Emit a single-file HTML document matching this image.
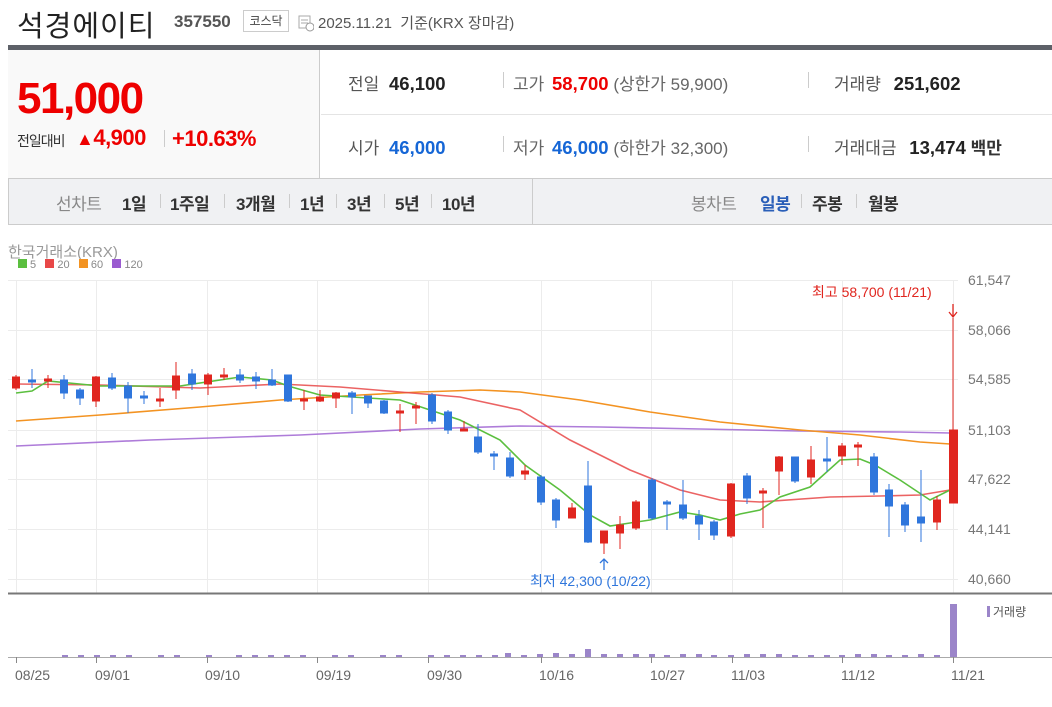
<!DOCTYPE html>
<html><head><meta charset="utf-8"><style>
*{margin:0;padding:0;box-sizing:border-box}
body{width:1052px;height:707px;background:#fff;font-family:"Liberation Sans","Noto Sans CJK KR",sans-serif;position:relative;overflow:hidden;color:#222}
.a{position:absolute;white-space:nowrap}
.t{position:absolute;top:190px;font-size:17px;font-weight:bold;color:#333;letter-spacing:-0.5px}
.s{position:absolute;top:194px;width:1px;height:14px;background:#ccc}
.n{font-weight:bold;font-size:18.5px}
</style></head><body>
<div class="a" style="left:17px;top:3px;font-size:29px;color:#222;letter-spacing:1px">석경에이티</div>
<div class="a" style="left:174px;top:12px;font-size:17px;font-weight:bold;color:#555">357550</div>
<div class="a" style="left:243px;top:10px;width:46px;height:22px;border:1px solid #ccc;font-size:12px;color:#444;text-align:center;line-height:20px">코스닥</div>
<svg class="a" style="left:298px;top:14px" width="16" height="18"><rect x="1" y="2" width="11" height="12" fill="none" stroke="#aaa"/><line x1="3" y1="6" x2="10" y2="6" stroke="#aaa"/><line x1="3" y1="9" x2="10" y2="9" stroke="#aaa"/><circle cx="12" cy="13" r="4" fill="#fff" stroke="#999"/></svg>
<div class="a" style="left:318px;top:12px;font-size:15px;color:#555">2025.11.21 &nbsp;기준(KRX 장마감)</div>
<div class="a" style="left:8px;top:45px;width:1044px;height:5px;background:#5d6168"></div>
<div class="a" style="left:8px;top:50px;width:312px;height:128px;background:#f9f9f9;border-right:1px solid #ccc"></div>
<div class="a" style="left:321px;top:114px;width:731px;height:1px;background:#e4e4e4"></div>
<div class="a" style="left:17px;top:74px;font-size:44px;font-weight:bold;color:#e00;letter-spacing:-1.5px">51,000</div>
<div class="a" style="left:17px;top:131px;font-size:14px;color:#333;letter-spacing:-1px">전일대비</div>
<div class="a" style="left:76px;top:125px;font-size:22px;font-weight:bold;color:#e00;letter-spacing:-0.5px"><span style="font-size:18px">▲</span>4,900</div>
<div class="a" style="left:164px;top:130px;width:1px;height:17px;background:#ccc"></div>
<div class="a" style="left:172px;top:126px;font-size:22px;font-weight:bold;color:#e00;letter-spacing:-0.5px">+10.63%</div>
<div class="a" style="left:348px;top:70px;font-size:17px;color:#555">전일 <span class="n" style="color:#222;margin-left:5px">46,100</span></div>
<div class="a" style="left:348px;top:134px;font-size:17px;color:#555">시가 <span class="n" style="color:#1566d6;margin-left:5px">46,000</span></div>
<div class="a" style="left:503px;top:72px;width:1px;height:16px;background:#ccc"></div>
<div class="a" style="left:503px;top:136px;width:1px;height:16px;background:#ccc"></div>
<div class="a" style="left:513px;top:70px;font-size:17px;color:#666">고가 <span class="n" style="color:#e00;margin-left:3px">58,700</span> (상한가 59,900)</div>
<div class="a" style="left:513px;top:134px;font-size:17px;color:#666">저가 <span class="n" style="color:#1566d6;margin-left:3px">46,000</span> (하한가 32,300)</div>
<div class="a" style="left:808px;top:72px;width:1px;height:16px;background:#ccc"></div>
<div class="a" style="left:808px;top:136px;width:1px;height:16px;background:#ccc"></div>
<div class="a" style="left:834px;top:70px;font-size:17px;color:#555">거래량 <span class="n" style="color:#222;margin-left:8px">251,602</span></div>
<div class="a" style="left:834px;top:134px;font-size:17px;color:#555">거래대금 <span class="n" style="color:#222;margin-left:8px">13,474</span><span style="color:#333;font-weight:bold"> 백만</span></div>
<div class="a" style="left:8px;top:178px;width:1044px;height:47px;background:#f0f1f3;border:1px solid #ccc;border-right:none"></div>
<div class="a" style="left:532px;top:179px;width:1px;height:45px;background:#ccc"></div>
<div class="t" style="left:56px;color:#888;font-weight:normal">선차트</div>
<div class="t" style="left:122px">1일</div><div class="s" style="left:160px"></div>
<div class="t" style="left:170px">1주일</div><div class="s" style="left:224px"></div>
<div class="t" style="left:236px">3개월</div><div class="s" style="left:289px"></div>
<div class="t" style="left:300px">1년</div><div class="s" style="left:336px"></div>
<div class="t" style="left:347px">3년</div><div class="s" style="left:384px"></div>
<div class="t" style="left:395px">5년</div><div class="s" style="left:431px"></div>
<div class="t" style="left:442px">10년</div>
<div class="t" style="left:691px;color:#888;font-weight:normal">봉차트</div>
<div class="t" style="left:760px;color:#2a5fb8">일봉</div><div class="s" style="left:801px"></div>
<div class="t" style="left:812px">주봉</div><div class="s" style="left:856px"></div>
<div class="t" style="left:868px">월봉</div>
<div class="a" style="left:8px;top:241px;font-size:15px;color:#999">한국거래소(KRX)</div>
<div class="a" style="left:18px;top:259px;font-size:11px;color:#888"><span style="display:inline-block;width:9px;height:9px;background:#5bbf3f"></span> 5 &nbsp; <span style="display:inline-block;width:9px;height:9px;background:#e84848"></span> 20 &nbsp; <span style="display:inline-block;width:9px;height:9px;background:#f39322"></span> 60 &nbsp; <span style="display:inline-block;width:9px;height:9px;background:#9a5bd0"></span> 120</div>
<svg class="a" style="left:0;top:0" width="1052" height="707">
<g stroke="#ececec" stroke-width="1">
<line x1="8" y1="280.5" x2="958" y2="280.5"/><line x1="8" y1="330.5" x2="958" y2="330.5"/><line x1="8" y1="379.5" x2="958" y2="379.5"/><line x1="8" y1="430.5" x2="958" y2="430.5"/><line x1="8" y1="479.5" x2="958" y2="479.5"/><line x1="8" y1="529.5" x2="958" y2="529.5"/><line x1="8" y1="579.5" x2="958" y2="579.5"/>
<line x1="16.5" y1="280" x2="16.5" y2="593"/><line x1="96.5" y1="280" x2="96.5" y2="593"/><line x1="207.5" y1="280" x2="207.5" y2="593"/><line x1="317.5" y1="280" x2="317.5" y2="593"/><line x1="428.5" y1="280" x2="428.5" y2="593"/><line x1="541.5" y1="280" x2="541.5" y2="593"/><line x1="651.5" y1="280" x2="651.5" y2="593"/><line x1="732.5" y1="280" x2="732.5" y2="593"/><line x1="842.5" y1="280" x2="842.5" y2="593"/><line x1="953.5" y1="280" x2="953.5" y2="593"/>
</g>
<g font-size="14" fill="#777" font-family="Liberation Sans,sans-serif">
<text x="968" y="285">61,547</text><text x="968" y="335">58,066</text><text x="968" y="384">54,585</text><text x="968" y="435">51,103</text><text x="968" y="484">47,622</text><text x="968" y="534">44,141</text><text x="968" y="584">40,660</text>
</g>
<g fill="none" stroke-width="1.6">
<polyline stroke="#9a5bd0" opacity=".8" points="16,446 150,440 300,435 420,429 520,426 600,427 700,429 800,431 900,432 950,433"/>
<polyline stroke="#f39322" points="16,421 100,415 200,407 280,400 360,395 420,392 480,390 520,392 580,400 650,412 720,422 800,430 860,435 920,442 950,444"/>
<polyline stroke="#e84848" opacity=".85" points="16,384 100,385 200,388 280,384 340,387 400,392 460,397 520,410 570,440 630,470 680,490 720,500 760,502 830,497 880,496 920,495 950,490"/>
<polyline stroke="#5bbf3f" points="16,393 32,391 48,381 100,386 180,386 240,377 272,380 288,386 320,395 400,400 430,410 460,420 500,440 525,465 560,490 590,515 610,526 630,523 650,520 680,512 700,515 720,520 740,514 760,510 780,497 810,487 840,460 860,459 875,465 900,480 930,500 950,490"/>
</g>
<g stroke-width="1">
<g stroke="#e0261f" fill="#e0261f">
<line x1="16" y1="375" x2="16" y2="390"/><rect x="12.5" y="377" width="7" height="11"/>
<line x1="48" y1="375" x2="48" y2="388"/><rect x="44.5" y="379" width="7" height="2"/>
<line x1="96" y1="376" x2="96" y2="407"/><rect x="92.5" y="377" width="7" height="24"/>
<line x1="160" y1="388" x2="160" y2="407"/><rect x="156.5" y="399" width="7" height="2"/>
<line x1="176" y1="362" x2="176" y2="399"/><rect x="172.5" y="376" width="7" height="14"/>
<line x1="208" y1="373" x2="208" y2="395"/><rect x="204.5" y="375" width="7" height="9"/>
<line x1="224" y1="368" x2="224" y2="380"/><rect x="220.5" y="375" width="7" height="2"/>
<line x1="304" y1="390" x2="304" y2="410"/><rect x="300.5" y="399" width="7" height="2"/>
<line x1="320" y1="390" x2="320" y2="402"/><rect x="316.5" y="397" width="7" height="4"/>
<line x1="336" y1="392" x2="336" y2="408"/><rect x="332.5" y="393" width="7" height="5"/>
<line x1="400" y1="404" x2="400" y2="432"/><rect x="396.5" y="411" width="7" height="2"/>
<line x1="416" y1="402" x2="416" y2="424"/><rect x="412.5" y="406" width="7" height="2"/>
<line x1="464" y1="421" x2="464" y2="431"/><rect x="460.5" y="429" width="7" height="2"/>
<line x1="525" y1="465" x2="525" y2="480"/><rect x="521.5" y="471" width="7" height="3"/>
<line x1="572" y1="503" x2="572" y2="518"/><rect x="568.5" y="508" width="7" height="10"/>
<line x1="604" y1="531" x2="604" y2="554"/><rect x="600.5" y="531" width="7" height="12"/>
<line x1="620" y1="516" x2="620" y2="549"/><rect x="616.5" y="525" width="7" height="8"/>
<line x1="636" y1="500" x2="636" y2="530"/><rect x="632.5" y="502" width="7" height="26"/>
<line x1="731" y1="483" x2="731" y2="538"/><rect x="727.5" y="484" width="7" height="52"/>
<line x1="763" y1="488" x2="763" y2="528"/><rect x="759.5" y="491" width="7" height="2"/>
<line x1="779" y1="456" x2="779" y2="495"/><rect x="775.5" y="457" width="7" height="14"/>
<line x1="811" y1="446" x2="811" y2="484"/><rect x="807.5" y="460" width="7" height="17"/>
<line x1="842" y1="443" x2="842" y2="465"/><rect x="838.5" y="446" width="7" height="10"/>
<line x1="858" y1="442" x2="858" y2="466"/><rect x="854.5" y="445" width="7" height="2"/>
<line x1="937" y1="496" x2="937" y2="530"/><rect x="933.5" y="500" width="7" height="22"/>
<line x1="953" y1="318" x2="953" y2="503"/><rect x="949.5" y="430" width="8" height="73"/>
</g>
<g stroke="#2f76dc" fill="#2f76dc">
<line x1="32" y1="369" x2="32" y2="388"/><rect x="28.5" y="380" width="7" height="2"/>
<line x1="64" y1="375" x2="64" y2="399"/><rect x="60.5" y="380" width="7" height="13"/>
<line x1="80" y1="388" x2="80" y2="405"/><rect x="76.5" y="390" width="7" height="8"/>
<line x1="112" y1="373" x2="112" y2="390"/><rect x="108.5" y="378" width="7" height="10"/>
<line x1="128" y1="382" x2="128" y2="413"/><rect x="124.5" y="386" width="7" height="12"/>
<line x1="144" y1="391" x2="144" y2="404"/><rect x="140.5" y="396" width="7" height="2"/>
<line x1="192" y1="369" x2="192" y2="390"/><rect x="188.5" y="374" width="7" height="10"/>
<line x1="240" y1="369" x2="240" y2="383"/><rect x="236.5" y="375" width="7" height="5"/>
<line x1="256" y1="372" x2="256" y2="389"/><rect x="252.5" y="377" width="7" height="4"/>
<line x1="272" y1="369" x2="272" y2="386"/><rect x="268.5" y="380" width="7" height="5"/>
<line x1="288" y1="375" x2="288" y2="402"/><rect x="284.5" y="375" width="7" height="26"/>
<line x1="352" y1="391" x2="352" y2="414"/><rect x="348.5" y="393" width="7" height="4"/>
<line x1="368" y1="396" x2="368" y2="408"/><rect x="364.5" y="396" width="7" height="7"/>
<line x1="384" y1="400" x2="384" y2="414"/><rect x="380.5" y="401" width="7" height="12"/>
<line x1="432" y1="393" x2="432" y2="424"/><rect x="428.5" y="395" width="7" height="26"/>
<line x1="448" y1="410" x2="448" y2="434"/><rect x="444.5" y="412" width="7" height="18"/>
<line x1="478" y1="424" x2="478" y2="454"/><rect x="474.5" y="437" width="7" height="15"/>
<line x1="494" y1="451" x2="494" y2="470"/><rect x="490.5" y="454" width="7" height="2"/>
<line x1="510" y1="452" x2="510" y2="478"/><rect x="506.5" y="458" width="7" height="18"/>
<line x1="541" y1="475" x2="541" y2="505"/><rect x="537.5" y="477" width="7" height="25"/>
<line x1="556" y1="498" x2="556" y2="528"/><rect x="552.5" y="500" width="7" height="20"/>
<line x1="588" y1="461" x2="588" y2="543"/><rect x="584.5" y="486" width="7" height="56"/>
<line x1="652" y1="478" x2="652" y2="520"/><rect x="648.5" y="480" width="7" height="38"/>
<line x1="667" y1="500" x2="667" y2="530"/><rect x="663.5" y="502" width="7" height="2"/>
<line x1="683" y1="480" x2="683" y2="520"/><rect x="679.5" y="505" width="7" height="13"/>
<line x1="699" y1="510" x2="699" y2="540"/><rect x="695.5" y="516" width="7" height="8"/>
<line x1="714" y1="520" x2="714" y2="540"/><rect x="710.5" y="522" width="7" height="13"/>
<line x1="747" y1="473" x2="747" y2="504"/><rect x="743.5" y="476" width="7" height="22"/>
<line x1="795" y1="457" x2="795" y2="483"/><rect x="791.5" y="457" width="7" height="24"/>
<line x1="827" y1="437" x2="827" y2="472"/><rect x="823.5" y="459" width="7" height="2"/>
<line x1="874" y1="453" x2="874" y2="495"/><rect x="870.5" y="457" width="7" height="35"/>
<line x1="889" y1="484" x2="889" y2="537"/><rect x="885.5" y="490" width="7" height="16"/>
<line x1="905" y1="502" x2="905" y2="532"/><rect x="901.5" y="505" width="7" height="20"/>
<line x1="921" y1="470" x2="921" y2="542"/><rect x="917.5" y="517" width="7" height="6"/>
</g>
</g>
<text x="812" y="297" font-size="14" fill="#e0261f" font-family="Liberation Sans,Noto Sans CJK KR,sans-serif">최고 58,700 (11/21)</text>
<path d="M953 304v13M949 312l4 5 4-5" stroke="#e0261f" fill="none" stroke-width="1.3"/>
<path d="M604 570v-11M600 563l4-4 4 4" stroke="#2f76dc" fill="none" stroke-width="1.3"/>
<text x="530" y="586" font-size="14" fill="#2f76dc" font-family="Liberation Sans,Noto Sans CJK KR,sans-serif">최저 42,300 (10/22)</text>
<line x1="8" y1="593.5" x2="1052" y2="593.5" stroke="#777" stroke-width="2"/>
<line x1="8" y1="657.5" x2="1052" y2="657.5" stroke="#aaa"/>
<g fill="#9b85c9">
<rect x="62" y="655" width="6" height="2"/><rect x="78" y="655" width="6" height="2"/><rect x="94" y="655" width="6" height="2"/><rect x="110" y="655" width="6" height="2"/><rect x="126" y="655" width="6" height="2"/><rect x="158" y="655" width="6" height="2"/><rect x="174" y="655" width="6" height="2"/><rect x="206" y="655" width="6" height="2"/><rect x="236" y="655" width="6" height="2"/><rect x="252" y="655" width="6" height="2"/><rect x="268" y="655" width="6" height="2"/><rect x="284" y="655" width="6" height="2"/><rect x="300" y="655" width="6" height="2"/><rect x="332" y="655" width="6" height="2"/><rect x="348" y="655" width="6" height="2"/><rect x="380" y="655" width="6" height="2"/><rect x="396" y="655" width="6" height="2"/><rect x="428" y="655" width="6" height="2"/><rect x="444" y="655" width="6" height="2"/><rect x="460" y="655" width="6" height="2"/><rect x="476" y="655" width="6" height="2"/><rect x="492" y="655" width="6" height="2"/><rect x="505" y="653" width="6" height="4"/><rect x="521" y="655" width="6" height="2"/><rect x="537" y="654" width="6" height="3"/><rect x="553" y="653" width="6" height="4"/><rect x="569" y="654" width="6" height="3"/><rect x="585" y="649" width="6" height="8"/><rect x="601" y="654" width="6" height="3"/><rect x="617" y="654" width="6" height="3"/><rect x="633" y="654" width="6" height="3"/><rect x="649" y="654" width="6" height="3"/><rect x="664" y="655" width="6" height="2"/><rect x="680" y="654" width="6" height="3"/><rect x="696" y="654" width="6" height="3"/><rect x="711" y="655" width="6" height="2"/><rect x="728" y="655" width="6" height="2"/><rect x="744" y="654" width="6" height="3"/><rect x="760" y="654" width="6" height="3"/><rect x="776" y="654" width="6" height="3"/><rect x="792" y="655" width="6" height="2"/><rect x="808" y="655" width="6" height="2"/><rect x="824" y="655" width="6" height="2"/><rect x="839" y="655" width="6" height="2"/><rect x="855" y="654" width="6" height="3"/><rect x="871" y="654" width="6" height="3"/><rect x="886" y="655" width="6" height="2"/><rect x="902" y="655" width="6" height="2"/><rect x="918" y="654" width="6" height="3"/><rect x="934" y="655" width="6" height="2"/>
<rect x="950" y="604" width="7" height="53"/>
<rect x="987" y="606" width="3" height="11"/>
</g>
<text x="993" y="616" font-size="12" fill="#555" font-family="Liberation Sans,Noto Sans CJK KR,sans-serif">거래량</text>
<g stroke="#888"><line x1="16.5" y1="657" x2="16.5" y2="663"/><line x1="96.5" y1="657" x2="96.5" y2="663"/><line x1="207.5" y1="657" x2="207.5" y2="663"/><line x1="317.5" y1="657" x2="317.5" y2="663"/><line x1="428.5" y1="657" x2="428.5" y2="663"/><line x1="541.5" y1="657" x2="541.5" y2="663"/><line x1="651.5" y1="657" x2="651.5" y2="663"/><line x1="732.5" y1="657" x2="732.5" y2="663"/><line x1="842.5" y1="657" x2="842.5" y2="663"/><line x1="953.5" y1="657" x2="953.5" y2="663"/></g>
<g font-size="14" fill="#666" font-family="Liberation Sans,sans-serif">
<text x="15" y="680">08/25</text><text x="95" y="680">09/01</text><text x="205" y="680">09/10</text><text x="316" y="680">09/19</text><text x="427" y="680">09/30</text><text x="539" y="680">10/16</text><text x="650" y="680">10/27</text><text x="731" y="680">11/03</text><text x="841" y="680">11/12</text><text x="951" y="680">11/21</text>
</g>
</svg>
</body></html>
